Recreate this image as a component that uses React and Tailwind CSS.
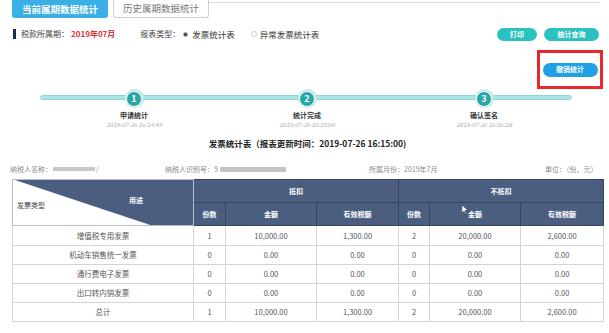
export default function App() {
  const steps = [
    { n: 1, label: "申请统计", time: "2019-07-26 16:14:44", x: 134 },
    { n: 2, label: "统计完成", time: "2019-07-26 16:15:00", x: 307 },
    { n: 3, label: "确认签名", time: "2019-07-26 16:16:28", x: 484 },
  ];

  const rows = [
    ["增值税专用发票", "1", "10,000.00", "1,300.00", "2", "20,000.00", "2,600.00"],
    ["机动车销售统一发票", "0", "0.00", "0.00", "0", "0.00", "0.00"],
    ["通行费电子发票", "0", "0.00", "0.00", "0", "0.00", "0.00"],
    ["出口转内销发票", "0", "0.00", "0.00", "0", "0.00", "0.00"],
    ["总计", "1", "10,000.00", "1,300.00", "2", "20,000.00", "2,600.00"],
  ];

  return (
    <div
      className="w-[609px] h-[333px] bg-white overflow-hidden text-[#333]"
      style={{ fontFamily: '"Noto Sans CJK SC", "Noto Sans", sans-serif' }}
    >
      {/* tabs */}
      <div className="flex items-start pl-[12px] h-[18px]">
        <div className="w-[96px] h-[18px] bg-[#3aafe6] rounded-b-[3px] flex items-center justify-center text-white text-[9.5px] font-bold">
          当前属期数据统计
        </div>
        <div className="ml-[5px] w-[96px] h-[18px] border border-t-0 border-[#cfcfcf] rounded-b-[3px] flex items-center justify-center text-[#777] text-[9.5px]">
          历史属期数据统计
        </div>
        <div className="flex-1 mt-[2px] mr-[9px] h-px bg-[#dcdcdc]"></div>
      </div>

      {/* period + report type + buttons */}
      <div className="flex items-center h-[14px] mt-[9px] pl-[13px] pr-[10px]">
        <div className="w-[3px] h-[10px] bg-[#1d2a52]"></div>
        <span className="ml-[5px] text-[8px] text-[#444]">税款所属期：</span>
        <span className="ml-[2px] text-[8px] text-[#d8343a] font-bold">2019年07月</span>
        <span className="ml-[25px] text-[8px] text-[#444]">报表类型：</span>
        <span className="ml-[3px] w-[5px] h-[5px] rounded-full border border-[#999] flex items-center justify-center">
          <span className="w-[3px] h-[3px] rounded-full bg-[#333]"></span>
        </span>
        <span className="ml-[4px] text-[8.5px] text-[#333]">发票统计表</span>
        <span className="ml-[16px] w-[6px] h-[6px] rounded-full border border-[#ccc]"></span>
        <span className="ml-[3px] text-[8.5px] text-[#333]">异常发票统计表</span>
        <div className="ml-auto flex gap-[7px]">
          <div className="w-[40px] h-[13px] rounded-full bg-[#2cc1c1] text-white text-[7px] font-bold flex items-center justify-center">
            打印
          </div>
          <div className="w-[55px] h-[13px] rounded-full bg-[#2cc1c1] text-white text-[7px] font-bold flex items-center justify-center">
            统计查询
          </div>
        </div>
      </div>

      {/* revoke */}
      <div className="flex justify-end pr-[6px] mt-[9px]">
        <div className="w-[66px] h-[39px] border-[3px] border-[#e8292b] flex items-center justify-center">
          <div className="w-[55px] h-[14px] rounded-full bg-[#1fa1e3] text-white text-[7px] font-bold flex items-center justify-center">
            撤销统计
          </div>
        </div>
      </div>

      {/* progress */}
      <div className="relative h-[48px]">
        <div className="absolute left-[40px] top-[6px] w-[532px] h-[5px] rounded-full bg-[#a9e5e5] border border-[#8fd6d6]"></div>
        {steps.map((s) => (
          <div
            key={s.n}
            className="absolute top-0 w-[100px] flex flex-col items-center"
            style={{ left: s.x - 50 }}
          >
            <div className="w-[19px] h-[19px] rounded-full bg-[#bfeaea] flex items-center justify-center">
              <div className="w-[16px] h-[16px] rounded-full bg-[#2aa6a8] border-[1.5px] border-white flex items-center justify-center text-white text-[9px] font-bold">
                {s.n}
              </div>
            </div>
            <div className="mt-[2px] text-[7px] font-bold text-[#333] leading-[10px]">{s.label}</div>
            <div className="text-[6px] italic text-[#aaa] leading-[9px]">{s.time}</div>
          </div>
        ))}
      </div>

      {/* title */}
      <div className="text-center text-[8.5px] font-bold text-[#222] leading-[12px] pl-[6px]">
        发票统计表（报表更新时间：2019-07-26 16:15:00)
      </div>

      {/* info */}
      <div className="relative h-[12px] mt-[14px] text-[7px] text-[#8a8a8a] leading-[12px]">
        <div className="absolute left-[10px] flex items-center">
          纳税人名称：<span className="inline-block w-[42px] h-[4px] bg-[#c8c8cc] mx-[1px]"></span>/
        </div>
        <div className="absolute left-[165px] flex items-center">
          纳税人识别号：9<span className="inline-block w-[66px] h-[5px] bg-[#c4c4c8] ml-[2px]"></span>
        </div>
        <div className="absolute left-[369px]">所属月份：2019年7月</div>
        <div className="absolute left-[545px]">单位：（份、元）</div>
      </div>

      {/* table */}
      <table className="ml-[12px] mt-[4px] border-collapse table-fixed w-[591px] text-[7.5px]">
        <colgroup>
          <col className="w-[181px]" />
          <col className="w-[32px]" />
          <col className="w-[91px]" />
          <col className="w-[82px]" />
          <col className="w-[31px]" />
          <col className="w-[91px]" />
          <col className="w-[83px]" />
        </colgroup>
        <thead>
          <tr className="h-[23px]">
            <th rowSpan={2} className="relative p-0 border border-[#b8bec8] bg-white">
              <svg className="absolute inset-0 w-full h-full" viewBox="0 0 181 48" preserveAspectRatio="none">
                <polygon points="2,0 181,0 181,48 138,48" fill="#4c5e7f" />
              </svg>
              <span className="absolute left-[4px] top-[20px] text-[#444] font-normal text-[7px]">发票类型</span>
              <span className="absolute left-[116px] top-[15px] text-white font-bold text-[7px]">用途</span>
            </th>
            <th colSpan={3} className="bg-[#4c5e7f] border border-[#34445f] text-white font-bold text-[7px]">抵扣</th>
            <th colSpan={3} className="bg-[#4c5e7f] border border-[#34445f] text-white font-bold text-[7px]">不抵扣</th>
          </tr>
          <tr className="h-[23px]">
            {["份数", "金额", "有效税额", "份数", "金额", "有效税额"].map((h, i) => (
              <th key={i} className="relative bg-[#4c5e7f] border border-[#34445f] text-white font-bold text-[7px]">
                {h}
                {i === 4 && (
                  <svg className="absolute left-[32px] top-[2px] w-[6px] h-[9px]" viewBox="0 0 6 9">
                    <polygon points="0,0 0,8 2,6 3.5,9 4.5,8.5 3,5.5 6,5.5" fill="#fff" stroke="#333" strokeWidth="0.5" />
                  </svg>
                )}
              </th>
            ))}
          </tr>
        </thead>
        <tbody>
          {rows.map((r, ri) => (
            <tr key={ri} className={ri === 0 ? "h-[20px]" : "h-[19px]"}>
              {r.map((c, ci) => (
                <td key={ci} className="border border-[#d4d4d4] text-center text-[#555] p-0">
                  {c}
                </td>
              ))}
            </tr>
          ))}
        </tbody>
      </table>
    </div>
  );
}
